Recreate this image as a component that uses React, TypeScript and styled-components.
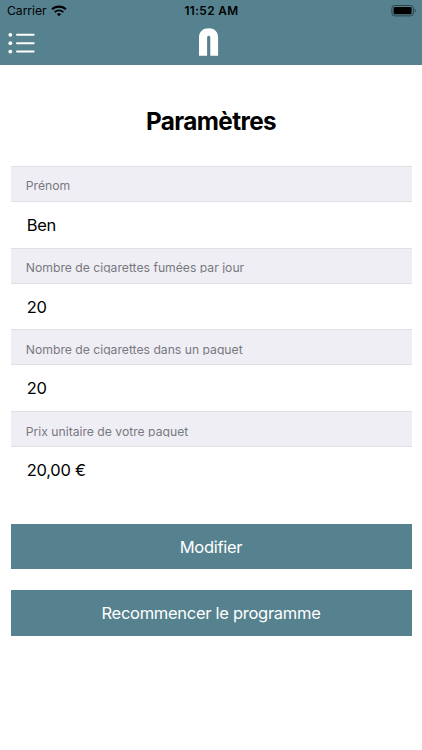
import React from "react";
import styled, { createGlobalStyle } from "styled-components";

const GlobalStyle = createGlobalStyle`
  *, *::before, *::after { box-sizing: border-box; }
  body {
    margin: 0;
    background: #fff;
    color: #000;
    font-family: Inter, "Liberation Sans", sans-serif;
  }
`;

const Screen = styled.div`
  height: 750px;
  overflow: hidden;
  background: #fff;
`;

const Header = styled.header`
  height: 65.3px;
  background: #56828f;
`;

const StatusBar = styled.div`
  display: grid;
  grid-template-columns: 1fr auto 1fr;
  align-items: center;
  height: 22px;
  padding: 0 6px 0 7px;
`;

const Carrier = styled.div`
  display: flex;
  align-items: center;
  gap: 4px;
  font-size: 12.2px;
  line-height: 22px;
  letter-spacing: -0.05px;
`;

const Clock = styled.div`
  font-size: 11.8px;
  line-height: 22px;
  font-weight: 600;
  letter-spacing: 0.4px;
`;

const Battery = styled.div`
  display: flex;
  justify-content: flex-end;
`;

const NavBar = styled.nav`
  display: grid;
  grid-template-columns: 1fr auto 1fr;
  align-items: center;
  height: 40px;
  padding: 0 12px 0 8px;
`;

const MenuButton = styled.button`
  display: flex;
  width: 28px;
  padding: 2px 0 0;
  border: 0;
  background: none;
`;

const Content = styled.main`
  padding: 0 10.5px;
`;

const Title = styled.h1`
  margin: 0;
  padding-top: 40px;
  height: 100.7px;
  font-size: 24.3px;
  line-height: 32px;
  font-weight: 700;
  letter-spacing: -0.6px;
  text-align: center;
`;

const Field = styled.section`
  height: 81.75px;
`;

const FieldHeader = styled.div`
  height: 36px;
  padding: 11.3px 15px 0 15.3px;
  background: #efeef5;
  border-top: 1px solid #e0dfe4;
  border-bottom: 1px solid #e0dfe4;
`;

/* Shorter than its line box, so descenders are trimmed. */
const FieldLabel = styled.div`
  height: 13px;
  overflow: hidden;
  color: #79797d;
  font-size: 12.2px;
  line-height: 15px;
  letter-spacing: -0.01px;
  white-space: nowrap;
`;

const FieldValue = styled.div`
  padding-left: 16.2px;
  font-size: 16.5px;
  line-height: 46px;
  letter-spacing: -0.25px;
`;

const Actions = styled.div`
  display: grid;
  gap: 20.3px;
  padding-top: 30.7px;
`;

const ActionButton = styled.button`
  height: 45.8px;
  padding: 0;
  border: 0;
  background: #56828f;
  color: #fff;
  font: 400 16.5px/46px Inter, "Liberation Sans", sans-serif;
  letter-spacing: -0.28px;
`;

const fields = [
  { label: "Prénom", value: "Ben" },
  { label: "Nombre de cigarettes fumées par jour", value: "20" },
  { label: "Nombre de cigarettes dans un paquet", value: "20" },
  { label: "Prix unitaire de votre paquet", value: "20,00 €" },
];

const WifiIcon = () => (
  <svg width="16" height="12" viewBox="0 0 16 12" fill="none" stroke="#000">
    <path d="M1.1 4.3C4.9.6 11.1.6 14.9 4.3" strokeWidth="2.2" />
    <path d="M3.7 7.1C6.1 4.8 9.9 4.8 12.3 7.1" strokeWidth="1.9" />
    <path d="M8 11.3 5.8 9.1C7.1 8 8.9 8 10.2 9.1Z" fill="#000" stroke="none" />
  </svg>
);

const BatteryIcon = () => (
  <svg width="25" height="12" viewBox="0 0 25 12">
    <rect x=".9" y=".5" width="21.4" height="10.4" rx="2.8" fill="none" stroke="#2c4249" />
    <rect x="2.6" y="2.1" width="18" height="7.2" rx="1.3" />
    <path d="M23.6 3.8v4c1.4-.7 1.4-3.3 0-4Z" fill="#2c4249" />
  </svg>
);

const ListIcon = () => (
  <svg width="28" height="22" viewBox="0 0 28 22" stroke="#fff" fill="#fff">
    {[2.8, 11.2, 19.6].map((y) => (
      <g key={y}>
        <circle cx="2.3" cy={y} r="1.9" stroke="none" />
        <path d={`M9 ${y}H25.6`} strokeWidth="2" strokeLinecap="round" />
      </g>
    ))}
  </svg>
);

const ArchLogo = () => (
  <svg width="20" height="28" viewBox="0 0 20 28" fill="#fff">
    <path d="M0 27.8V9.5C0 3.5 4 .2 9.7.2s9.4 3.3 9.4 9.3v18.3h-7.8V9.4c0-2.1-3.2-2.1-3.2 0v18.4Z" />
  </svg>
);

export default function App() {
  return (
    <>
      <GlobalStyle />
      <Screen>
        <Header>
          <StatusBar>
            <Carrier>
              <span>Carrier</span>
              <WifiIcon />
            </Carrier>
            <Clock>11:52 AM</Clock>
            <Battery>
              <BatteryIcon />
            </Battery>
          </StatusBar>
          <NavBar>
            <MenuButton aria-label="Menu">
              <ListIcon />
            </MenuButton>
            <ArchLogo />
          </NavBar>
        </Header>
        <Content>
          <Title>Paramètres</Title>
          {fields.map(({ label, value }) => (
            <Field key={label}>
              <FieldHeader>
                <FieldLabel>{label}</FieldLabel>
              </FieldHeader>
              <FieldValue>{value}</FieldValue>
            </Field>
          ))}
          <Actions>
            <ActionButton>Modifier</ActionButton>
            <ActionButton>Recommencer le programme</ActionButton>
          </Actions>
        </Content>
      </Screen>
    </>
  );
}
